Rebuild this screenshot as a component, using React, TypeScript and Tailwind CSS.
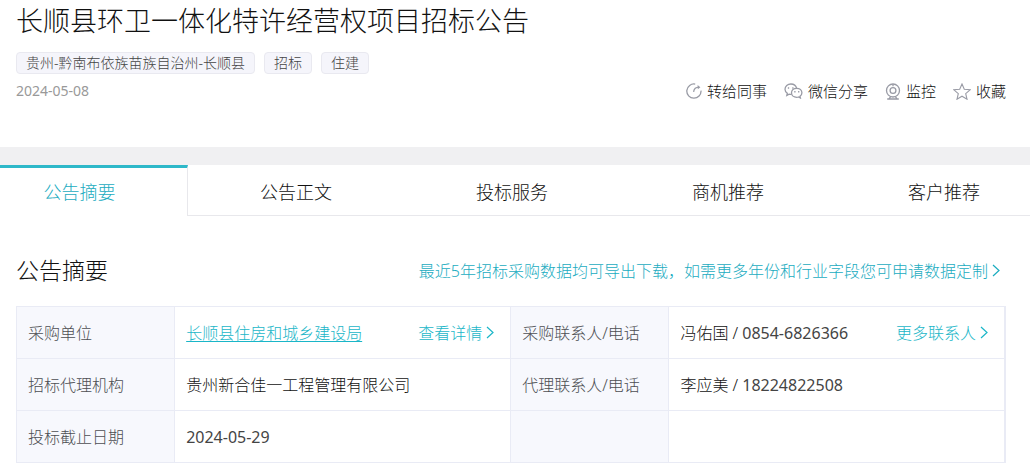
import type { ReactNode } from "react";
import clsx from "clsx";

const tags = ["贵州-黔南布依族苗族自治州-长顺县", "招标", "住建"];

const tabs = ["公告摘要", "公告正文", "投标服务", "商机推荐", "客户推荐"];

function ShareIcon() {
  return (
    <svg viewBox="0 0 16 16" className="size-4" fill="none" stroke="currentColor" strokeWidth="1.3">
      <path d="M9.200 1.100A7.100 7.100 0 1 0 15 7.600" />
      <path d="M7.600 8.800C8 6 9.800 4.300 13 4.200" />
      <path d="M11.600 2 14.400 4.200 11.800 6.200z" fill="currentColor" stroke="none" />
    </svg>
  );
}

function WechatIcon() {
  return (
    <svg viewBox="0 0 19 16" className="h-4 w-[19px]" fill="none" stroke="currentColor" strokeWidth="1.3">
      <path d="M12.600 5.200C12 2.700 9.700 1 6.900 1 3.600 1 1 3.300 1 6.200c0 1.700.9 3.100 2.300 4.100L2.800 12.400l2.300-1.200c.8.200 1.600.3 2.500.2" />
      <path d="M12.700 5.300c-2.900 0-5.200 2-5.200 4.500s2.300 4.500 5.200 4.500c.6 0 1.200-.1 1.800-.3l1.900 1-.4-1.700c1.200-.8 1.900-2.100 1.900-3.500 0-2.500-2.300-4.500-5.200-4.500z" />
      <path d="M4.500 4.300v1.500M8.900 4.300v1.500M10.900 8v1.500M14.700 8v1.500" />
    </svg>
  );
}

function MonitorIcon() {
  return (
    <svg viewBox="0 0 16 17" className="h-[17px] w-4" fill="none" stroke="currentColor" strokeWidth="1.3">
      <circle cx="8" cy="7.500" r="6.500" />
      <circle cx="8" cy="7.500" r="2.900" />
      <path d="M8 1.300v1.900" />
      <path d="M5.600 13.700 4.200 15.600M10.400 13.700l1.400 1.900M2.200 16h11.600" />
    </svg>
  );
}

function StarIcon() {
  return (
    <svg viewBox="0 0 18 17" className="h-[17px] w-[18px]" fill="none" stroke="currentColor" strokeWidth="1.1">
      <path d="M9 1l2.300 5.300 5.800.5-4.400 3.800 1.300 5.600L9 13.200l-5 3 1.300-5.600L.9 6.800l5.800-.5z" />
    </svg>
  );
}

function Chevron() {
  return (
    <svg viewBox="0 0 8 14" className="h-[14px] w-2" fill="none" stroke="currentColor" strokeWidth="1.2">
      <path d="M1 1 7 6.500l-6 5.500" />
    </svg>
  );
}

const actions = [
  { label: "转给同事", icon: <ShareIcon /> },
  { label: "微信分享", icon: <WechatIcon /> },
  { label: "监控", icon: <MonitorIcon /> },
  { label: "收藏", icon: <StarIcon /> },
];

function MoreLink({ children }: { children: ReactNode }) {
  return (
    <a href="#" className="flex shrink-0 items-center gap-1 text-[#1ab6c8]">
      {children}
      <Chevron />
    </a>
  );
}

function Label({ children }: { children?: ReactNode }) {
  return (
    <th
      scope="row"
      className="w-[16%] border border-[#e9ebf5] bg-[#f7f8fd] px-[11px] text-left font-light text-[#4c4e52]"
    >
      {children}
    </th>
  );
}

function Value({ children, more }: { children?: ReactNode; more?: string }) {
  return (
    <td className="w-[34%] border border-[#e9ebf5] pr-4 pl-[11px]">
      <div className="flex items-center justify-between">
        <span>{children}</span>
        {more && <MoreLink>{more}</MoreLink>}
      </div>
    </td>
  );
}

export default function App() {
  return (
    <main className="bg-white pb-2 font-['Noto_Sans','Noto_Sans_CJK_SC',sans-serif] text-base font-light text-[#111]">
      <header className="pr-6 pb-11 pl-4">
        <h1 className="text-[27px] leading-[42px]">长顺县环卫一体化特许经营权项目招标公告</h1>
        <ul className="mt-[10px] flex gap-[9px] text-sm leading-5 text-[#444]">
          {tags.map((tag) => (
            <li key={tag} className="rounded border border-[#e9e9f0] bg-[#f5f5fb] px-[9px]">
              {tag}
            </li>
          ))}
        </ul>
        <div className="mt-[5px] flex items-center justify-between">
          <time dateTime="2024-05-08" className="text-sm font-normal text-[#999]">
            2024-05-08
          </time>
          <div className="flex gap-[17px]">
            {actions.map((action) => (
              <button key={action.label} type="button" className="flex items-center gap-[5px] text-[15px] leading-6">
                <span className="text-[#999ba5]">{action.icon}</span>
                {action.label}
              </button>
            ))}
          </div>
        </div>
      </header>

      <div className="h-[18px] bg-[#f0f0f2]" />

      <nav className="overflow-hidden">
        <div role="tablist" className="-mr-[22px] -ml-7 grid grid-cols-5">
          {tabs.map((tab, i) => (
            <button
              key={tab}
              type="button"
              role="tab"
              aria-selected={i === 0}
              className={clsx(
                "h-[51px] border-t-[3px] text-lg",
                i === 0
                  ? "border-r border-t-[#2eb8c9] border-r-[#e8e8ec] text-[#1aacbf]"
                  : "border-b border-t-transparent border-b-[#e8e8ec]",
              )}
            >
              {tab}
            </button>
          ))}
        </div>
      </nav>

      <section className="pt-[38px] pr-6 pl-4">
        <div className="flex h-[52px] items-start justify-between pr-[6px]">
          <h2 className="text-[23px] leading-8">公告摘要</h2>
          <a href="#" className="flex items-center gap-1 leading-[34px] text-[#1aacbf]">
            最近5年招标采购数据均可导出下载，如需更多年份和行业字段您可申请数据定制
            <Chevron />
          </a>
        </div>
        <table className="w-full table-fixed border-collapse border-r-2 border-[#e9ebf5]">
          <tbody>
            <tr className="h-[52px]">
              <Label>采购单位</Label>
              <Value more="查看详情">
                <a href="#" className="text-[#1ab6c8] underline underline-offset-2">
                  长顺县住房和城乡建设局
                </a>
              </Value>
              <Label>采购联系人/电话</Label>
              <Value more="更多联系人">
                冯佑国 / <span className="font-normal text-[#444]">0854-6826366</span>
              </Value>
            </tr>
            <tr className="h-[52px]">
              <Label>招标代理机构</Label>
              <Value>贵州新合佳一工程管理有限公司</Value>
              <Label>代理联系人/电话</Label>
              <Value>
                李应美 / <span className="font-normal text-[#444]">18224822508</span>
              </Value>
            </tr>
            <tr className="h-[52px]">
              <Label>投标截止日期</Label>
              <Value>
                <time dateTime="2024-05-29" className="font-normal text-[#444]">
                  2024-05-29
                </time>
              </Value>
              <Label />
              <Value />
            </tr>
          </tbody>
        </table>
      </section>
    </main>
  );
}
